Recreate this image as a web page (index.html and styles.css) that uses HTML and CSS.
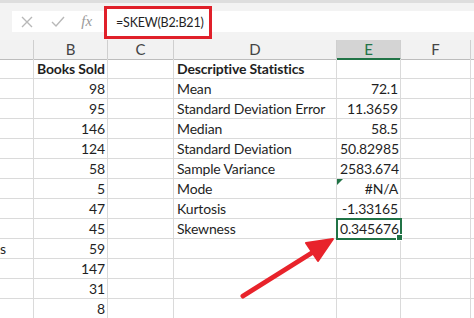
FILE: index.html
```html
<!DOCTYPE html>
<html lang="en">
<head>
  <meta charset="UTF-8" />
  <title>Skewness</title>
  <link rel="stylesheet" href="styles.css">
</head>
<body>

  <div class="topbar">
    <div class="icons">
      <svg width="14" height="14" viewBox="0 0 14 14"><path d="M2 2 L12 12 M12 2 L2 12" stroke="#b8b8b8" stroke-width="1.4" fill="none"/></svg>
      <svg width="16" height="14" viewBox="0 0 16 14"><path d="M2 7 L6 11 L14 2" stroke="#b8b8b8" stroke-width="1.4" fill="none"/></svg>
      <span class="fx">fx</span>
    </div>
    <div class="formula">=SKEW(B2:B21)</div>
    <div class="formula-rest"></div>
  </div>

  <div class="sheet">
    <div class="row head">
      <div></div><div>B</div><div>C</div><div>D</div><div class="cur">E</div><div>F</div><div></div>
    </div>
    <div class="row">
      <div></div><div class="b">Books Sold</div><div></div><div class="b over">Descriptive Statistics</div><div></div><div></div><div></div>
    </div>
    <div class="row">
      <div></div><div class="n">98</div><div></div><div>Mean</div><div class="n">72.1</div><div></div><div></div>
    </div>
    <div class="row">
      <div></div><div class="n">95</div><div></div><div>Standard Deviation Error</div><div class="n">11.3659</div><div></div><div></div>
    </div>
    <div class="row">
      <div></div><div class="n">146</div><div></div><div>Median</div><div class="n">58.5</div><div></div><div></div>
    </div>
    <div class="row">
      <div></div><div class="n">124</div><div></div><div>Standard Deviation</div><div class="n">50.82985</div><div></div><div></div>
    </div>
    <div class="row">
      <div></div><div class="n">58</div><div></div><div>Sample Variance</div><div class="n">2583.674</div><div></div><div></div>
    </div>
    <div class="row">
      <div></div><div class="n">5</div><div></div><div>Mode</div><div class="n err">#N/A</div><div></div><div></div>
    </div>
    <div class="row">
      <div></div><div class="n">47</div><div></div><div>Kurtosis</div><div class="n">-1.33165</div><div></div><div></div>
    </div>
    <div class="row">
      <div></div><div class="n">45</div><div></div><div>Skewness</div><div class="n sel">0.345676</div><div></div><div></div>
    </div>
    <div class="row">
      <div class="cut">s</div><div class="n">59</div><div></div><div></div><div></div><div></div><div></div>
    </div>
    <div class="row">
      <div></div><div class="n">147</div><div></div><div></div><div></div><div></div><div></div>
    </div>
    <div class="row">
      <div></div><div class="n">31</div><div></div><div></div><div></div><div></div><div></div>
    </div>
    <div class="row">
      <div></div><div class="n">8</div><div></div><div></div><div></div><div></div><div></div>
    </div>

    <svg class="arrow" width="474" height="318" viewBox="0 0 474 318">
      <path d="M243 296 L318 249" stroke="#e8232b" stroke-width="5" stroke-linecap="round"/>
      <path d="M333 239 L306 243 L318 261 Z" fill="#e8232b" stroke="#e8232b" stroke-width="2" stroke-linejoin="round"/>
    </svg>
  </div>

</body>
</html>
```

FILE: styles.css
```css
body {
  margin: 0;
  font-family: Lato, 'Liberation Sans', sans-serif;
  background-color: white;
  color: #1f1f1f;
  overflow: hidden;
}

.topbar {
  height: 37px;
  border-top: 3px solid #dedede;
  background-color: #f3f3f3;
  display: flex;
  align-items: center;
  padding-left: 12px;
}

.icons {
  width: 92px;
  height: 21px;
  background-color: white;
  display: flex;
  align-items: center;
  justify-content: space-around;
  padding-right: 4px;
  box-sizing: border-box;
}

.fx {
  font-family: 'Liberation Serif', serif;
  font-style: italic;
  color: #9a9a9a;
  font-size: 15px;
}

.formula {
  width: 108px;
  height: 33px;
  box-sizing: border-box;
  border: 3px solid #e0202a;
  background-color: white;
  font-size: 12.5px;
  letter-spacing: -0.2px;
  padding-left: 9px;
  display: flex;
  align-items: center;
  margin-top: 1px;
  white-space: nowrap;
}

.formula-rest {
  flex-grow: 1;
  height: 21px;
  background-color: white;
}

.sheet {
  position: relative;
}

.row {
  display: grid;
  grid-template-columns: 34px 74px 66px 163px 64px 70px 1fr;
  height: 20px;
  font-size: 14px;
  letter-spacing: -0.15px;
}

.row > div {
  border-right: 1px solid #dadada;
  border-bottom: 1px solid #dadada;
  padding: 0 3px;
  line-height: 19px;
  white-space: nowrap;
  position: relative;
}

.row.head {
  height: 19px;
  background-color: #f2f2f2;
  color: #444;
  text-align: center;
  font-size: 15px;
  letter-spacing: 0;
}

.row.head > div {
  border-right-color: #cfcfcf;
  border-bottom-color: #bdbdbd;
  line-height: 18px;
}

.row.head .cur {
  background-color: #d4d4d4;
  border-bottom: 2px solid #217346;
  color: #217346;
}

.row .b {
  font-weight: bold;
}

.row .over {
  z-index: 1;
}

.row .n {
  text-align: right;
  padding-right: 2px;
}

.row .cut {
  padding: 0;
  text-align: left;
}

.row .err::before {
  content: "";
  position: absolute;
  left: 0;
  top: 0;
  border-top: 6px solid #217346;
  border-right: 6px solid transparent;
}

.row .sel {
  outline: 2px solid #217346;
  outline-offset: -1px;
  z-index: 2;
}

.row .sel::after {
  content: "";
  position: absolute;
  right: -3px;
  bottom: -3px;
  width: 5px;
  height: 5px;
  background-color: #217346;
  border: 1px solid white;
}

.arrow {
  position: absolute;
  left: 0;
  top: -40px;
  pointer-events: none;
  z-index: 3;
}
```
